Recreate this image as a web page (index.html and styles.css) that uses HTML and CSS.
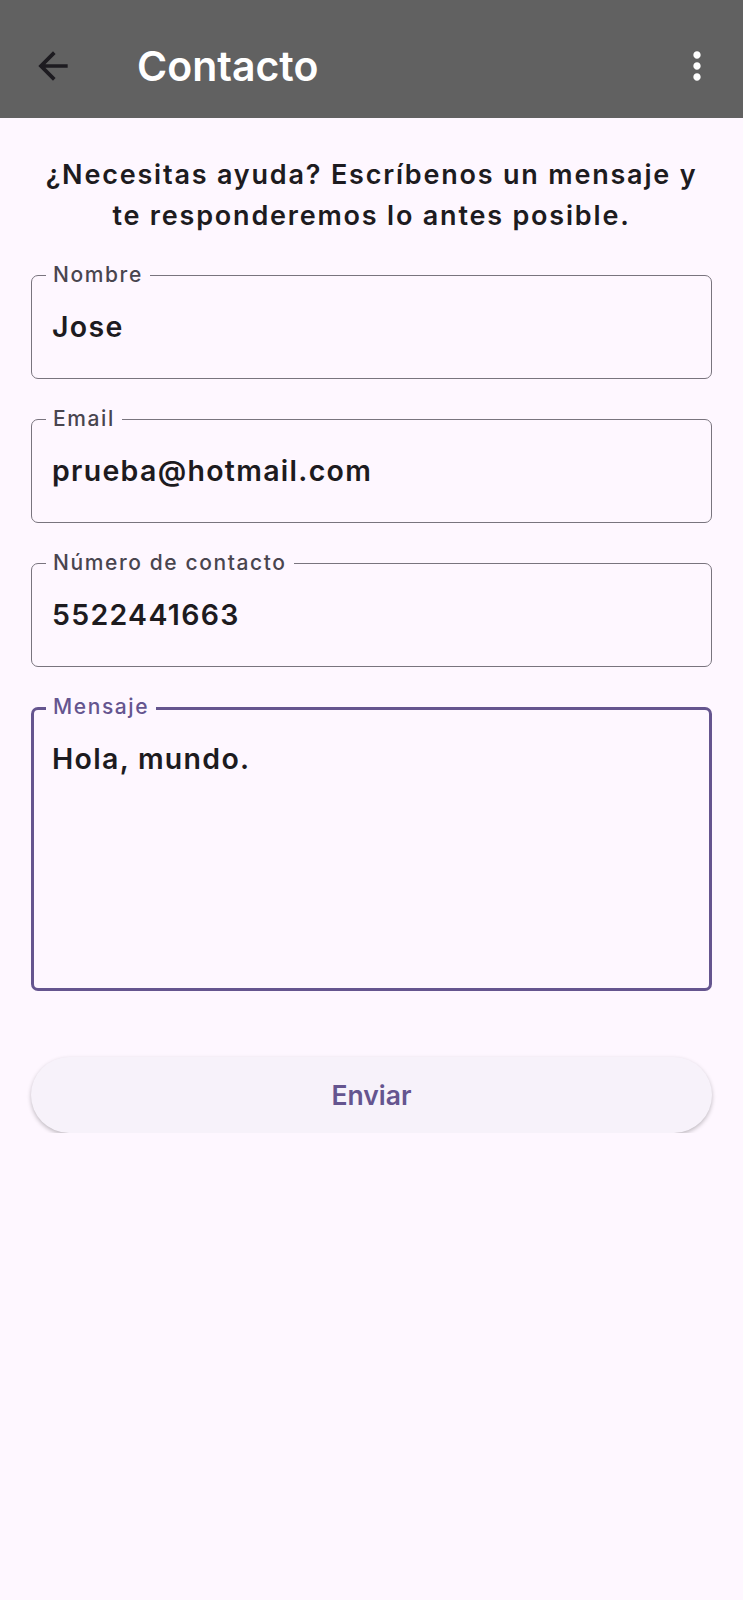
FILE: index.html
```html
<!DOCTYPE html>
<html lang="es">
<head>
    <meta charset="UTF-8">
    <meta name="viewport" content="width=device-width, initial-scale=1.0">
    <title>Contacto</title>
    <link rel="stylesheet" href="styles.css">
</head>

<body>
    <header class="appBar">
        <button class="iconBtn" type="button" aria-label="Volver">
            <svg viewBox="0 0 24 24" width="44" height="44">
                <path d="M20 11H7.83l5.59-5.59L12 4l-8 8 8 8 1.41-1.41L7.83 13H20v-2z" fill="#1d1b20"/>
            </svg>
        </button>
        <h1 class="appTitle">Contacto</h1>
        <button class="iconBtn menuBtn" type="button" aria-label="Más opciones">
            <svg viewBox="0 0 24 24" width="44" height="44">
                <path d="M12 8c1.1 0 2-.9 2-2s-.9-2-2-2-2 .9-2 2 .9 2 2 2zm0 2c-1.1 0-2 .9-2 2s.9 2 2 2 2-.9 2-2-.9-2-2-2zm0 6c-1.1 0-2 .9-2 2s.9 2 2 2 2-.9 2-2-.9-2-2-2z" fill="#fff"/>
            </svg>
        </button>
    </header>

    <main class="content">
        <p class="intro">¿Necesitas ayuda? Escríbenos un mensaje y te responderemos lo antes posible.</p>

        <form id="contactForm" class="contactForm">
            <div class="field">
                <label class="fieldLabel" for="nombre">Nombre</label>
                <input id="nombre" class="fieldInput" type="text" value="Jose">
            </div>
            <div class="field">
                <label class="fieldLabel" for="email">Email</label>
                <input id="email" class="fieldInput" type="email" value="prueba@hotmail.com">
            </div>
            <div class="field">
                <label class="fieldLabel" for="telefono">Número de contacto</label>
                <input id="telefono" class="fieldInput" type="tel" value="5522441663">
            </div>
            <div class="field fieldArea focused">
                <label class="fieldLabel" for="mensaje">Mensaje</label>
                <textarea id="mensaje" class="fieldInput">Hola, mundo.</textarea>
            </div>

            <button class="sendBtn" type="button">Enviar</button>
        </form>
    </main>
</body>
</html>
```

FILE: styles.css
```css
body {
    margin: 0;
    background-color: #fef7ff;
    color: #1d1b20;
    font-family: Inter, Roboto, sans-serif;
}

.appBar {
    height: 118px;
    box-sizing: border-box;
    padding: 14px 24px 0 31px;
    background-color: #616161;
    display: flex;
    align-items: center;
}

.iconBtn {
    width: 44px;
    height: 44px;
    padding: 0;
    border: none;
    background: none;
    display: flex;
}

.appTitle {
    margin: 0 0 0 62px;
    flex: 1;
    font-size: 41px;
    font-weight: 600;
    color: #fff;
}

.content {
    padding: 0 31px;
}

.intro {
    margin: 36px 0 0;
    padding: 0 8px;
    font-size: 27px;
    font-weight: 600;
    line-height: 41px;
    letter-spacing: 1.8px;
    text-align: center;
}

.contactForm {
    margin-top: 39px;
    display: flex;
    flex-direction: column;
    gap: 40px;
}

.field {
    position: relative;
    height: 104px;
    box-sizing: border-box;
    padding: 0 20px;
    border: 1.5px solid #79747e;
    border-radius: 7px;
    display: flex;
    align-items: center;
}

.fieldLabel {
    position: absolute;
    top: -16px;
    left: 14px;
    padding: 0 7px;
    background-color: #fef7ff;
    font-size: 21px;
    font-weight: 500;
    line-height: 30px;
    letter-spacing: 1.6px;
    color: #49454f;
}

.fieldInput {
    width: 100%;
    height: 38px;
    padding: 0;
    border: none;
    outline: none;
    background: none;
    font-family: inherit;
    font-size: 28.5px;
    font-weight: 600;
    line-height: 38px;
    letter-spacing: 1.3px;
    color: #1d1b20;
}

.fieldArea {
    height: 284px;
    padding: 30px 18px 0;
    align-items: flex-start;
}

.fieldArea .fieldInput {
    resize: none;
}

.focused {
    border: 3.5px solid #65558f;
}

.focused .fieldLabel {
    top: -18px;
    left: 12px;
    color: #65558f;
}

.sendBtn {
    margin-top: 26px;
    height: 76px;
    border: none;
    border-radius: 38px;
    background-color: #f7f2fa;
    box-shadow: 0 2px 4px rgba(0, 0, 0, 0.25);
    font-family: inherit;
    font-size: 26.5px;
    font-weight: 600;
    color: #65558f;
}
```
